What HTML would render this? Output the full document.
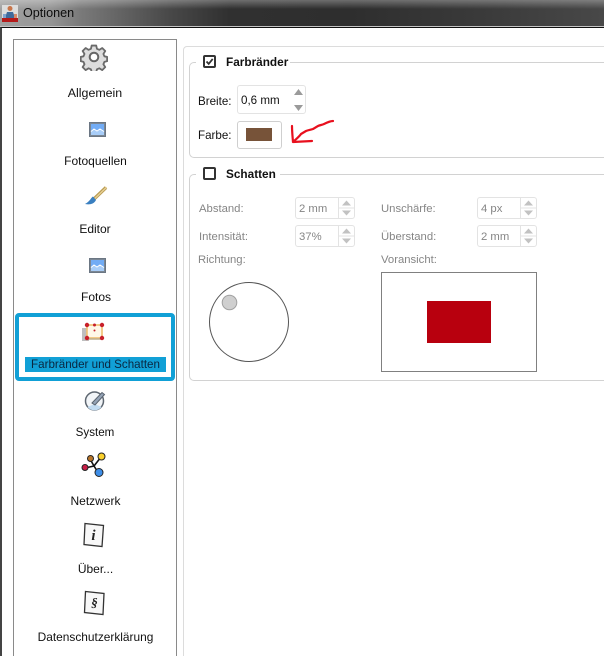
<!DOCTYPE html>
<html><head><meta charset="utf-8"><style>
html,body{margin:0;padding:0;width:604px;height:656px;overflow:hidden}
#r{position:absolute;left:0;top:0;width:604px;height:656px;overflow:hidden;background:#fff;font-family:"Liberation Sans",sans-serif;font-size:12px;color:#111}
#r div,#r span{position:absolute;box-sizing:border-box}
.t{white-space:nowrap;line-height:14px}
.c{transform:translateX(-50%);font-size:12px;color:#111}
.g{color:#858585;font-size:11.3px}
.sp{background:#fff;border:1px solid #e3e3e3;border-radius:3px}
.ga{border:1px solid #d2d2d2;border-right:none;border-radius:5px 0 0 5px}
</style></head><body><div id="r">
<div style="left:0;top:0;width:604px;height:27px;background:linear-gradient(90deg,#a0a0a0 0,#959595 50px,#7a7a7a 80px,#484848 170px,#303030 230px,#2e2e2e 350px,#3a3a3a 480px,#484848 604px)"></div>
<div style="left:0;top:0;width:604px;height:27px;background:linear-gradient(180deg,rgba(255,255,255,.3) 0,rgba(255,255,255,0) 9px)"></div>
<div style="left:0;top:26px;width:604px;height:1px;background:#c4c4c4"></div>
<div style="left:0;top:27px;width:604px;height:629px;background:#fff;border-left:2px solid #444;border-top:1px solid #111"></div>

<svg style="position:absolute;left:2px;top:5px" width="16" height="17" viewBox="0 0 16 17"><rect x="0" y="0" width="16" height="16" fill="#ddd"/><rect x="0" y="13" width="16" height="4" fill="#b41a1a"/><circle cx="8" cy="3.500" r="2.500" fill="#c8754a"/><path d="M3 13l2-6h6l2 6z" fill="#3f6a9c"/><rect x="1" y="9" width="3" height="4" fill="#7ea3d0"/><rect x="12" y="9" width="3" height="4" fill="#d68a6a"/></svg>
<div class="t" style="left:23px;top:6px;font-size:12.600px;color:#0c0c0c">Optionen</div>

<div style="left:13px;top:39px;width:164px;height:640px;border:1px solid #8a8a8a;background:#fff"></div>
<div style="left:183px;top:46px;width:430px;height:630px;border:1px solid #dcdcdc;border-radius:4px 0 0 0"></div>

<svg style="position:absolute;left:80px;top:43px" width="28" height="28" viewBox="0 0 28 28"><path d="M11.500 1.500h5l.8 3.600 2.600 1.100 3.200-2 3.300 3.300-2 3.200 1.100 2.600 3 .7v4.600l-3 .8-1.100 2.600 2 3.200-3.300 3.300-3.200-2-2.600 1.100-.8 3h-5l-.8-3-2.600-1.100-3.200 2-3.300-3.300 2-3.200-1.100-2.600-3-.8v-4.600l3-.7 1.100-2.600-2-3.200 3.300-3.300 3.200 2 2.600-1.100z" transform="translate(1.200 1.200) scale(.91)" fill="#dedede" stroke="#6a6a6a" stroke-width="2" stroke-linejoin="round"/><circle cx="14" cy="14" r="4.300" fill="#fff" stroke="#666" stroke-width="2"/></svg>
<div class="t c" style="left:95px;top:86px;font-size:12.400px">Allgemein</div>

<svg style="position:absolute;left:89px;top:122px" width="17" height="15" viewBox="0 0 17 15"><rect x=".5" y=".5" width="16" height="14" fill="#7b8794" stroke="#6b7683"/><rect x="2" y="2" width="13" height="11" fill="#72acf5"/><path d="M2 9.500l3-2.500 3 2 3-2 4 2.500v3.500H2z" fill="#a8cdf8"/><path d="M2 9.500l3-2.500 3 2 3-2 4 2.500" stroke="#fff" fill="none"/></svg>
<div class="t c" style="left:95.500px;top:154px">Fotoquellen</div>

<svg style="position:absolute;left:84px;top:186px" width="24" height="20" viewBox="0 0 24 20"><path d="M22 1.500L10 13" stroke="#b89a50" stroke-width="3.400"/><path d="M22.500 1.300L10.500 12.800" stroke="#e6cf94" stroke-width="1.400"/><path d="M1 18c5 1 9 0 11-4l-3-3.500c-2 1-3 5-8 7.500z" fill="#3a7fc0"/></svg>
<div class="t c" style="left:95px;top:222px">Editor</div>

<svg style="position:absolute;left:89px;top:258px" width="17" height="15" viewBox="0 0 17 15"><rect x=".5" y=".5" width="16" height="14" fill="#7b8794" stroke="#6b7683"/><rect x="2" y="2" width="13" height="11" fill="#72acf5"/><path d="M2 9.500l3-2.500 3 2 3-2 4 2.500v3.500H2z" fill="#a8cdf8"/><path d="M2 9.500l3-2.500 3 2 3-2 4 2.500" stroke="#fff" fill="none"/></svg>
<div class="t c" style="left:96px;top:290px">Fotos</div>

<div style="left:15px;top:313px;width:160px;height:68px;border:4px solid #11a0d6;border-radius:4px"></div>
<div style="left:25px;top:357px;width:141px;height:15px;background:#11a0d6"></div>
<svg style="position:absolute;left:80px;top:320px" width="26" height="24" viewBox="0 0 26 24"><rect x="2" y="8" width="7" height="13" fill="#888" opacity=".55"/><rect x="7" y="5" width="15" height="13" fill="#fff8e8" stroke="#f0c070" stroke-width="1.600"/><path d="M5 18h16v2H5z" fill="#b8a888" opacity=".7"/><g fill="#c8202a"><circle cx="7" cy="5" r="2.200"/><circle cx="14.500" cy="5" r="1.500"/><circle cx="22" cy="5" r="2.200"/><circle cx="14.500" cy="10.500" r="1"/><circle cx="7" cy="18" r="2.200"/><circle cx="22" cy="18" r="2.200"/></g></svg>
<div class="t c" style="left:95.500px;top:358px;font-size:11.600px;color:#0a2740">Farbränder und Schatten</div>

<svg style="position:absolute;left:83px;top:389px" width="24" height="24" viewBox="0 0 24 24"><circle cx="11.500" cy="12" r="9" fill="#f2f5f8" stroke="#5d6670" stroke-width="1.500"/><path d="M4.500 18a9 9 0 0 0 14 0l-7-3z" fill="#c2dcf2"/><path d="M9 14L19 3.500l2.500 2L12 16z" fill="#94a3b6" stroke="#59636f" stroke-width="1"/></svg>
<div class="t c" style="left:95px;top:426px;font-size:11.600px">System</div>

<svg style="position:absolute;left:80px;top:452px" width="28" height="28" viewBox="0 0 28 28"><path d="M5 16l9-2 5 8M14 14l-4-7M14 14l7-9" stroke="#111" stroke-width="1.600" fill="none"/><circle cx="5" cy="15.500" r="3" fill="#c81f48" stroke="#222"/><circle cx="10.500" cy="6.500" r="3" fill="#b8752a" stroke="#222"/><circle cx="21.500" cy="4.500" r="3.500" fill="#fad02c" stroke="#222"/><circle cx="19" cy="20.500" r="4" fill="#3e8ee8" stroke="#222"/></svg>
<div class="t c" style="left:95.500px;top:494px">Netzwerk</div>

<svg style="position:absolute;left:82px;top:522px" width="24" height="26" viewBox="0 0 24 26"><path d="M3 1.500L21.500 3.500 20 24.500 2 22.500z" fill="#f8f8f8" stroke="#333" stroke-width="1.300"/><text x="11.500" y="18" font-family="Liberation Serif,serif" font-style="italic" font-weight="bold" font-size="15" text-anchor="middle" fill="#222">i</text></svg>
<div class="t c" style="left:95.500px;top:562px">Über...</div>

<svg style="position:absolute;left:83px;top:590px" width="24" height="26" viewBox="0 0 24 26"><path d="M2.500 1.500L21 3.500 20 24.500 1.500 22.500z" fill="#f8f8f8" stroke="#333" stroke-width="1.300"/><text x="11.500" y="17" font-family="Liberation Serif,serif" font-style="italic" font-weight="bold" font-size="13" text-anchor="middle" fill="#222">§</text></svg>
<div class="t c" style="left:95.500px;top:630px;font-size:11.900px">Datenschutzerklärung</div>

<!-- Farbränder -->
<div class="ga" style="left:189px;top:62px;width:420px;height:96px"></div>
<div style="left:196px;top:55px;width:94px;height:14px;background:#fff"></div>
<div style="left:203px;top:55px;width:13px;height:13px;border:2px solid #333;border-radius:2px;background:#fff"></div>
<svg style="position:absolute;left:203px;top:55px" width="13" height="13" viewBox="0 0 13 13"><path d="M3.500 6.500l2.200 2.400 4-5" stroke="#333" stroke-width="1.800" fill="none"/></svg>
<div class="t" style="left:226px;top:55px;font-weight:bold;font-size:11.800px;color:#111">Farbränder</div>
<div class="t" style="left:198px;top:95px;font-size:11.600px">Breite:</div>
<div class="sp" style="left:237px;top:85px;width:69px;height:29px"></div>
<div class="t" style="left:241px;top:94px;font-size:11.600px">0,6 mm</div>
<svg style="position:absolute;left:294px;top:88px" width="9" height="24" viewBox="0 0 9 24"><path d="M4.500 1L9 7H0zM0 17h9l-4.500 6z" fill="#9a9a9a"/></svg>
<div class="t" style="left:198px;top:129px;font-size:11.600px">Farbe:</div>
<div class="sp" style="left:237px;top:121px;width:45px;height:28px;border-color:#cfcfcf"></div>
<div style="left:246px;top:128px;width:26px;height:13px;background:#775339"></div>
<svg style="position:absolute;left:288px;top:114px" width="50" height="32" viewBox="0 0 50 32"><path d="M4 12c0 5 .5 10 1 16l19-1M5 28c3-3 6-5 8-8l5-3c2-1 4-1 7-2l5-3c2-1 4-1 6-2 3-1.500 6-3 9-3" stroke="#e8101e" stroke-width="2.200" fill="none" stroke-linecap="round" stroke-linejoin="round"/></svg>

<!-- Schatten -->
<div class="ga" style="left:189px;top:174px;width:420px;height:207px"></div>
<div style="left:196px;top:167px;width:84px;height:14px;background:#fff"></div>
<div style="left:203px;top:167px;width:13px;height:13px;border:2px solid #333;border-radius:2px;background:#fff"></div>
<div class="t" style="left:226px;top:167px;font-weight:bold;font-size:11.800px;color:#111">Schatten</div>

<div class="t g" style="left:199px;top:202px">Abstand:</div>
<div class="sp" style="left:295px;top:197px;width:60px;height:22px"></div>
<div class="t g" style="left:299px;top:202px">2 mm</div>
<svg style="position:absolute;left:338px;top:197px" width="17" height="22" viewBox="0 0 17 22"><path d="M.5 1v20M1 11h15" stroke="#e3e3e3" fill="none"/><path d="M8.500 3.500L13 8.500H4zM4 13.500h9l-4.500 5z" fill="#c2c2c2"/></svg>
<div class="t g" style="left:199px;top:230px">Intensität:</div>
<div class="sp" style="left:295px;top:225px;width:60px;height:22px"></div>
<div class="t g" style="left:299px;top:230px">37%</div>
<svg style="position:absolute;left:338px;top:225px" width="17" height="22" viewBox="0 0 17 22"><path d="M.5 1v20M1 11h15" stroke="#e3e3e3" fill="none"/><path d="M8.500 3.500L13 8.500H4zM4 13.500h9l-4.500 5z" fill="#c2c2c2"/></svg>
<div class="t g" style="left:198px;top:253px">Richtung:</div>
<svg style="position:absolute;left:208px;top:281px" width="82" height="82" viewBox="0 0 82 82"><circle cx="41" cy="41" r="39.500" fill="#fff" stroke="#555" stroke-width="1"/><circle cx="21.500" cy="21.500" r="7.300" fill="#cfcfcf" stroke="#a0a0a0" stroke-width="1"/></svg>

<div class="t g" style="left:381px;top:202px">Unschärfe:</div>
<div class="sp" style="left:477px;top:197px;width:60px;height:22px"></div>
<div class="t g" style="left:481px;top:202px">4 px</div>
<svg style="position:absolute;left:520px;top:197px" width="17" height="22" viewBox="0 0 17 22"><path d="M.5 1v20M1 11h15" stroke="#e3e3e3" fill="none"/><path d="M8.500 3.500L13 8.500H4zM4 13.500h9l-4.500 5z" fill="#c2c2c2"/></svg>
<div class="t g" style="left:381px;top:230px">Überstand:</div>
<div class="sp" style="left:477px;top:225px;width:60px;height:22px"></div>
<div class="t g" style="left:481px;top:230px">2 mm</div>
<svg style="position:absolute;left:520px;top:225px" width="17" height="22" viewBox="0 0 17 22"><path d="M.5 1v20M1 11h15" stroke="#e3e3e3" fill="none"/><path d="M8.500 3.500L13 8.500H4zM4 13.500h9l-4.500 5z" fill="#c2c2c2"/></svg>
<div class="t g" style="left:381px;top:253px">Voransicht:</div>
<div style="left:381px;top:272px;width:156px;height:100px;border:1px solid #808080;background:#fff"></div>
<div style="left:427px;top:301px;width:64px;height:42px;background:#b8000e"></div>
</div></body></html>
